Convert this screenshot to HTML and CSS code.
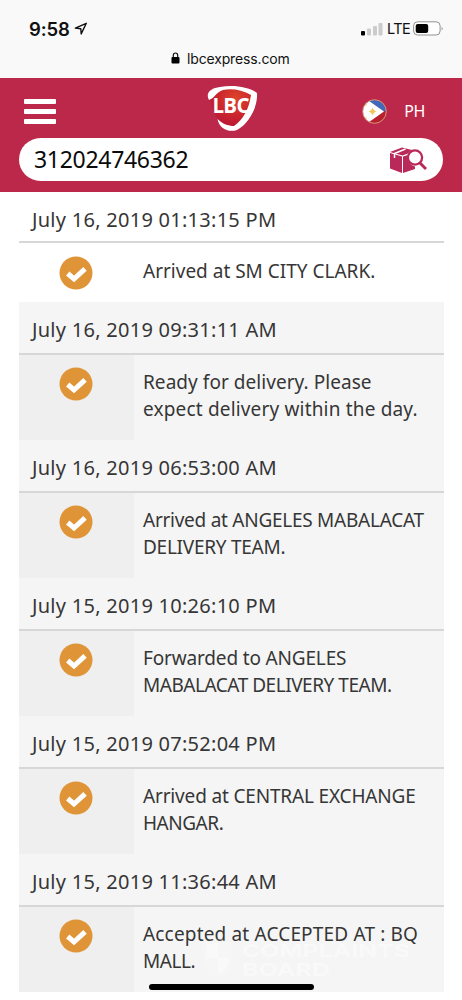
FILE: index.html
```html
<!DOCTYPE html>
<html lang="en">
<head>
<meta charset="utf-8">
<meta name="viewport" content="width=device-width, initial-scale=1">
<title>LBC Express tracking</title>
<link rel="stylesheet" href="styles.css">
</head>
<body>
<svg width="0" height="0" class="defs"><defs>
  <symbol id="check" viewBox="0 0 34 34"><circle cx="17" cy="17" r="16.5" fill="#e09438"/><path d="M8.700 17.500 15 23 26 12.800" fill="none" stroke="#fff" stroke-width="5"/></symbol>
</defs></svg>
<div class="phone">
  <div class="chrome">
    <div class="status">
      <span class="time">9:58</span>
      <svg class="locate" width="14" height="14" viewBox="0 0 14 14"><path d="M1.300 6.100 12.300 1.300 7.200 11.900 6.800 6.800Z" fill="none" stroke="#111" stroke-width="1.400" stroke-linejoin="round"/></svg>
      <svg class="signal" width="22" height="14" viewBox="0 0 22 14"><rect x="0" y="9" width="4" height="4.500" rx="1"/><g fill="#ccc"><rect x="6" y="6.500" width="4" height="7" rx="1"/><rect x="12" y="4" width="4" height="9.500" rx="1"/><rect x="17.500" y="1" width="4" height="12.500" rx="1"/></g></svg>
      <span class="lte">LTE</span>
      <svg class="battery" width="31" height="15" viewBox="0 0 31 15"><rect x=".6" y=".8" width="26.500" height="13.200" rx="4" fill="#fff" stroke="#929292"/><rect x="2.700" y="2.900" width="12.500" height="9" rx="2"/><path d="M28.700 5.500Q30.500 7.500 28.700 9.500Z" fill="#888"/></svg>
    </div>
    <div class="address">
      <svg width="9" height="12" viewBox="0 0 9 12"><rect x=".5" y="5" width="8" height="6.500" rx="1"/><path d="M2.300 5.500V3.500a2.200 2.500 0 0 1 4.400 0v2" fill="none" stroke="#111" stroke-width="1.200"/></svg>
      <span>lbcexpress.com</span>
    </div>
  </div>
  <header class="brand">
    <div class="nav">
      <div class="menu"><i></i><i></i><i></i></div>
      <svg class="logo" width="52" height="47" viewBox="0 0 52 47">
        <defs><radialGradient id="red" cx="60%" cy="25%" r="70%"><stop offset="0" stop-color="#dd452b"/><stop offset=".6" stop-color="#cb252d"/><stop offset="1" stop-color="#b91836"/></radialGradient></defs>
        <path d="M4 9C12 2 39 2 47 8 48 24 39 40 27 44 13 40 4 26 4 9Z" fill="url(#red)"/>
        <path d="M3 15C-1 8 5 3 14 2 28-.5 43 2 51 8 52 23 42 39 31 45 22 48 13 43 11.500 34 17 39 22 41 28 41 37 35 43 24 45 10 36 4.500 25 3 17 5 10 7 9 13 3 15Z" fill="#fff"/>
        <text x="6.500" y="27.500" textLength="37" lengthAdjust="spacing">LBC</text>
      </svg>
      <div class="locale">
        <svg width="25" height="25" viewBox="0 0 25 25"><defs><clipPath id="disc"><circle cx="12.500" cy="12.500" r="11.500"/></clipPath></defs><g clip-path="url(#disc)"><path fill="#4169b8" d="M0 0h25v12.500H0z"/><path fill="#b7202e" d="M0 12.500h25V25H0z"/><path fill="#fff" d="M0-3 22 12.500 0 28z"/><g fill="#edc55a"><circle cx="10.500" cy="12.500" r="2.200"/><path d="m10.500 8 .8 3.500 3.500 1-3.500 1-.8 3.500-.8-3.500-3.500-1 3.500-1z"/><circle cx="4" cy="6" r=".8"/><circle cx="4" cy="19" r=".8"/></g></g><circle cx="12.500" cy="12.500" r="11.800" fill="none" stroke="#d9a17e" stroke-width=".9"/></svg>
        <span>PH</span>
      </div>
    </div>
    <div class="search">
      <span>312024746362</span>
      <svg width="38" height="28" viewBox="0 0 38 28"><g fill="#b9295a"><path d="m1 7 12 3.500V27L1 22.500Z"/><path d="m14 10.500 5-1.500a9 9 0 0 0 7 11.500V23L14 27Z"/><path d="m1 6 12-4.500L23 4q-3 1.500-4 3.500l-5.500 2Z"/></g><path d="m5.500 7.500 11-4.500M5.500 7v5" fill="none" stroke="#fff" stroke-width="1.500"/><circle cx="26" cy="11.500" r="7.100" fill="#fff" stroke="#b9295a" stroke-width="2.300"/><path d="m31 17 6 6" stroke="#b9295a" stroke-width="3"/></svg>
    </div>
  </header>
  <main class="timeline">
    <section class="event latest"><h2>July 16, 2019 01:13:15 PM</h2><div class="detail"><div class="mark"><svg><use href="#check"/></svg></div><p><span>Arrived at SM CITY CLARK.</span></p></div></section>
    <section class="event"><h2>July 16, 2019 09:31:11 AM</h2><div class="detail"><div class="mark"><svg><use href="#check"/></svg></div><p><span class="open">Ready for delivery. Please</span><br><span class="wide">expect delivery within the day.</span></p></div></section>
    <section class="event"><h2>July 16, 2019 06:53:00 AM</h2><div class="detail"><div class="mark"><svg><use href="#check"/></svg></div><p><span class="snug">Arrived at ANGELES MABALACAT</span><br><span class="snug">DELIVERY TEAM.</span></p></div></section>
    <section class="event"><h2>July 15, 2019 10:26:10 PM</h2><div class="detail"><div class="mark"><svg><use href="#check"/></svg></div><p><span class="slim">Forwarded to ANGELES</span><br><span class="tight">MABALACAT DELIVERY TEAM.</span></p></div></section>
    <section class="event"><h2>July 15, 2019 07:52:04 PM</h2><div class="detail"><div class="mark"><svg><use href="#check"/></svg></div><p><span class="slim">Arrived at CENTRAL EXCHANGE</span><br><span class="tight">HANGAR.</span></p></div></section>
    <section class="event"><h2>July 15, 2019 11:36:44 AM</h2><div class="detail"><div class="mark"><svg><use href="#check"/></svg></div><p><span class="wide">Accepted at ACCEPTED AT : BQ</span><br><span class="tight">MALL.</span></p></div></section>
  </main>
  <svg class="watermark" width="212" height="42" viewBox="0 0 212 42"><path d="M1 4 16 0 31 4V23Q29 36 16 41 3 36 1 23Z" opacity=".35"/><path d="M5 7 16 4V20H5ZM16 20H27Q26 32 16 36Z"/><text x="40" y="19" textLength="168" lengthAdjust="spacingAndGlyphs">COMPLAINTS</text><text x="40" y="38" textLength="88" lengthAdjust="spacingAndGlyphs">BOARD</text></svg>
  <div class="home"></div>
</div>
</body>
</html>
```
FILE: styles.css
```css
* { box-sizing: border-box; }
body { margin: 0; background: #fff; color: #363636; font-family: "Noto Sans", sans-serif; }
.defs { position: absolute; }
.phone { position: relative; width: 462px; height: 1000px; overflow: hidden; display: flex; flex-direction: column; }
.chrome { flex: none; height: 78px; background: #f9f9f9; color: #111; font-family: Inter, sans-serif; }
.status { display: flex; align-items: center; height: 44px; padding: 13px 18px 0 29px; }
.time { font-size: 18.5px; font-weight: 600; width: 41px; letter-spacing: -.1px; }
.locate { margin-left: 4px; }
.signal { margin-left: auto; }
.lte { margin: 0 3px 0 4px; width: 23px; font-size: 14.5px; letter-spacing: -.6px; display: block; }
.address { display: flex; align-items: center; height: 28px; padding-left: 171px; gap: 7px; font-size: 14px; letter-spacing: -.15px; }
.brand { flex: none; height: 114px; background: #bc284a; color: #fff; display: flex; flex-direction: column; }
.nav { height: 60px; display: flex; align-items: flex-start; padding: 7px 37px 0 24px; }
.menu { display: grid; gap: 5px; width: 32px; padding-top: 14px; }
.menu i { height: 5px; border-radius: 1px; background: #fff; }
.logo { margin-left: 150px; }
.logo text { fill: #fff; font: 700 20.5px "Open Sans", sans-serif; }
.locale { margin-left: auto; display: flex; align-items: center; padding-top: 14px; gap: 17px; font-size: 16px; letter-spacing: -.4px; line-height: 25px; }
.search { height: 43px; margin: 0 19px; padding: 0 16px 0 15px; border-radius: 22px; background: #fff; color: #0b0b0b; display: flex; align-items: center; justify-content: space-between; font-size: 23px; letter-spacing: -.3px; }
.search span { padding-bottom: 2px; }
.timeline { flex: none; width: 425px; height: 800px; margin-left: 19px; overflow: hidden; }
.event { height: 138px; background: #f5f5f5; }
.event h2 { margin: 0; height: 53px; padding: 0 0 0 13px; border-bottom: 2px solid #d7d7d7; font-size: 20px; font-weight: 400; letter-spacing: .27px; line-height: 56px; white-space: nowrap; }
.detail { display: flex; height: 85px; }
.mark { width: 115px; background: #efefef; padding: 12px 0 0 40px; }
.mark svg { display: block; width: 34px; height: 34px; }
.event p { margin: 0; padding: 14px 0 0 9px; font-size: 19px; line-height: 27px; white-space: nowrap; }
.wide { letter-spacing: .17px; }
.open { letter-spacing: .05px; }
.slim { letter-spacing: -.16px; }
.snug { letter-spacing: -.26px; }
.tight { letter-spacing: -.47px; }
.latest { height: 110px; background: #fff; }
.latest h2 { height: 51px; }
.latest .detail { height: 59px; }
.latest p { padding-top: 15px; }
.latest .mark { padding-top: 13px; background: #fff; }
.watermark { position: absolute; left: 202px; top: 938px; fill: #fff; opacity: .4; }
.watermark text { font: 700 18px Inter, sans-serif; }
.home { position: absolute; left: 149px; top: 984px; width: 165px; height: 6px; border-radius: 3px; background: #000; }
```
